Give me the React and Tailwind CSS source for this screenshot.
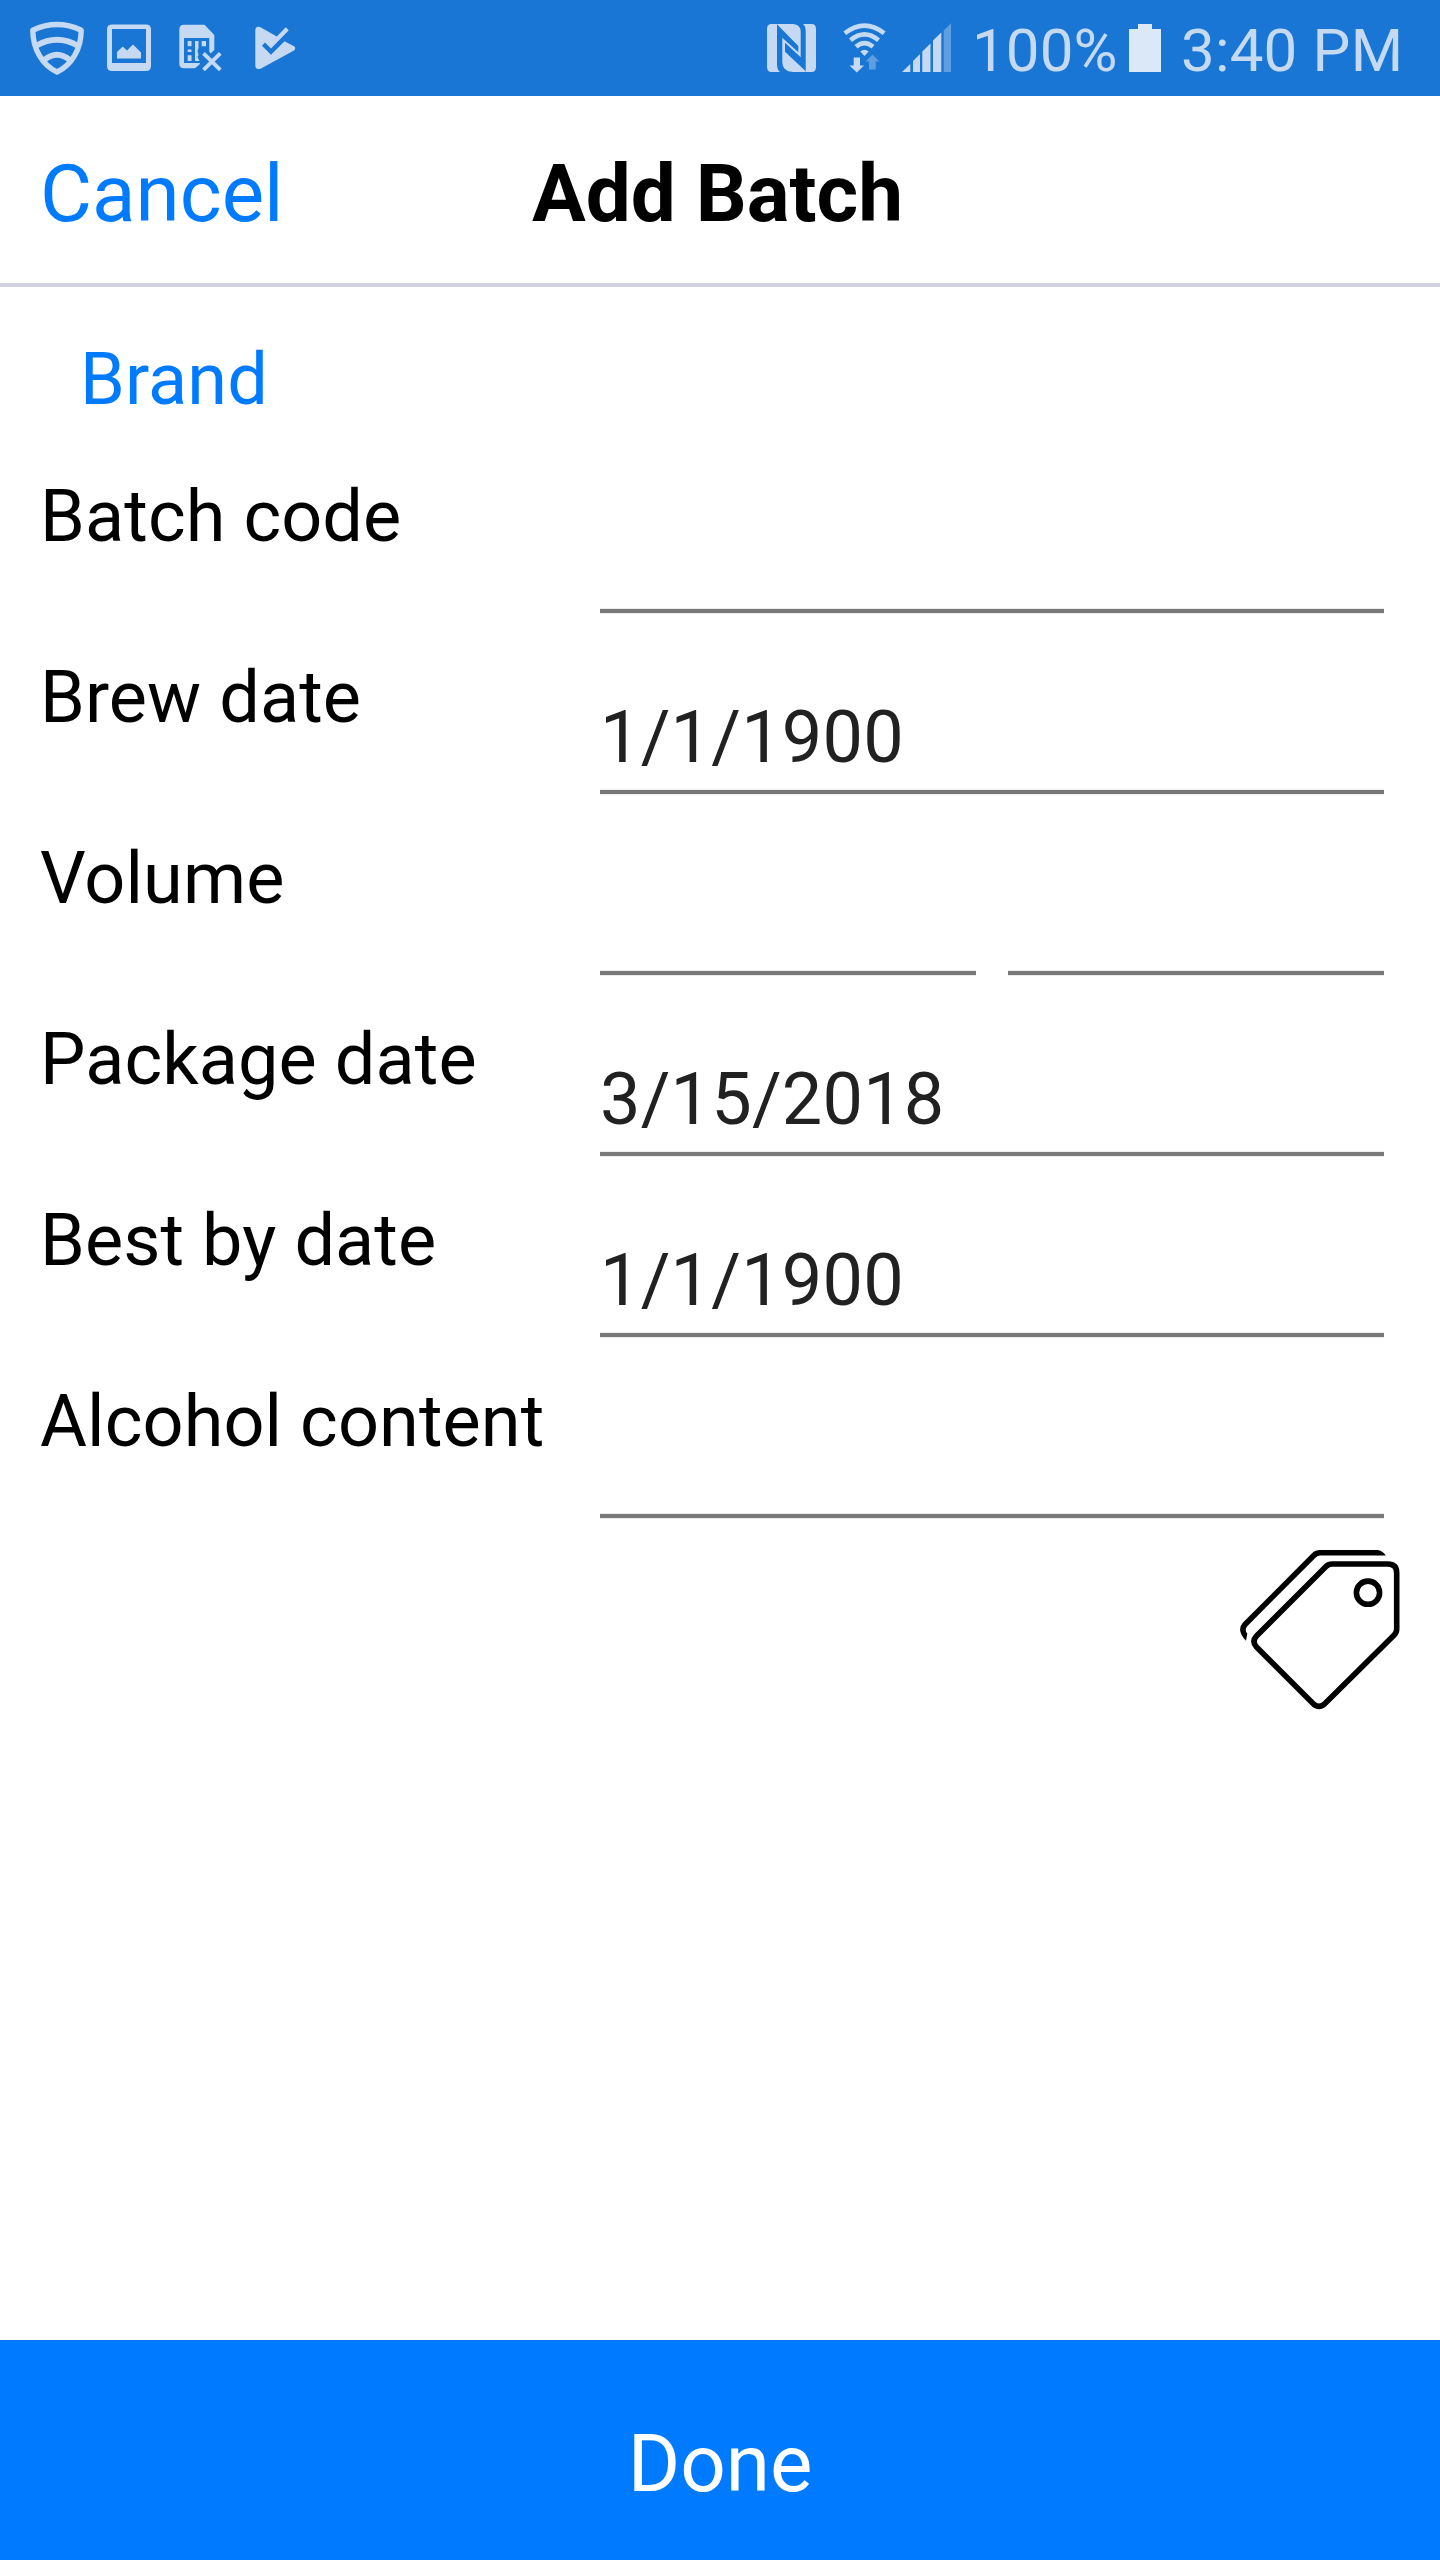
import React from "react";

const ICON = "#c5daf2";

function ShieldIcon() {
  return (
    <svg className="ml-[29px] h-[56px] w-[56px] shrink-0" viewBox="0 0 56 56" fill="none" stroke={ICON} strokeWidth="5.4" strokeLinejoin="round">
      <path d="M3.8 10.2Q28 -1.2 52.2 10.2C52.2 29 42.5 45.5 28 52C13.5 45.5 3.8 29 3.8 10.2Z" />
      <path d="M7.5 25.500Q28 14 48.500 25.500" strokeWidth="6" />
      <path d="M14.500 40.500Q28 29 41.500 40.500" strokeWidth="6" />
    </svg>
  );
}

function PictureIcon() {
  return (
    <svg className="ml-[22px] h-[48px] w-[44px] shrink-0" viewBox="0 0 44 48" fill={ICON}>
      <path fillRule="evenodd" d="M5 0.500H39Q44 0.500 44 5.500V42Q44 47 39 47H5Q0 47 0 42V5.500Q0 0.500 5 0.500ZM5 5V39H39V5Z" />
      <path d="M10 34.500V28L15.700 22.500L20 26.500L26 20.500L34 28.500V34.500Z" />
    </svg>
  );
}

function SimErrorIcon() {
  return (
    <svg className="ml-[28px] h-[48px] w-[44px] shrink-0" viewBox="0 0 44 48" fill={ICON}>
      <path fillRule="evenodd" d="M5 0.700H25.500L35.300 11V26L31.500 29.500L30.300 27.500V14H5V39H21L20.500 40.500L16 44.300H5Q0.300 44.300 0.300 39.600V5.400Q0.300 0.700 5 0.700Z" />
      <path d="M8.700 17H12.500V22.300H8.700ZM8.700 25.500H12.500V28H8.700ZM8.700 31.300H12.500V37H8.700ZM16 17H19.500V24L18.500 27L19.500 31L18.500 33L20.500 37H16ZM22.700 17H27V22.300H22.700Z" />
      <path stroke={ICON} strokeWidth="3.800" d="M24.500 29.300L41.300 45.800M41.300 29.300L24.500 45.800" />
    </svg>
  );
}

function PlayCheckIcon() {
  return (
    <svg className="ml-[32px] h-[48px] w-[42px] shrink-0" viewBox="0 0 42 48">
      <path fill={ICON} d="M0.300 6.500Q0.300 1.600 5 3L21.800 12.500L30.700 3.300L33.800 6.300L16 24.500L10 18.600L7 21.700L16 30.800L29.500 17.200L39 22.300Q41.500 24.300 39 26.500L5.500 44.800Q0.300 46 0.300 41.500Z" />
    </svg>
  );
}

function NfcIcon() {
  return (
    <svg className="h-[48px] w-[49px] shrink-0" viewBox="0 0 49 48" fill={ICON}>
      <path d="M4.500 0H10V41Q10.200 46 13 48H4.500Q0 48 0 43V5Q0 0 4.500 0Z" />
      <path d="M10 0H26Q33.700 0.500 33.700 8V33.300L18 18.700V27.700L38.500 47V48H26Q15.300 47.500 15.300 38V13.700L31.300 28.300V22L10.700 1Z" />
      <path d="M36 0H44.500Q49 0 49 5V43Q49 48 44.500 48H38.700V7Q38.700 2 36 0Z" />
    </svg>
  );
}

function WifiIcon() {
  return (
    <svg className="ml-[27px] h-[50px] w-[43px] shrink-0" viewBox="0 0 43 50">
      <g fill="none" stroke={ICON} strokeWidth="4.600">
        <path d="M1.800 10.300Q21.500 -5 41.200 10.300" />
        <path d="M7.500 17.200Q21.500 5.500 35.500 17.200" />
        <path d="M13 23.800Q21.500 16.500 30 23.800" />
      </g>
      <path fill={ICON} d="M17.300 28.500Q21.500 25 25.700 28.500L21.500 33Z" />
      <path fill={ICON} d="M10.700 34.500H17V42.500H21L13.800 49.500L6.500 42.500H10.700Z" />
      <path fill="#5e9fe0" d="M29.500 31.500L36.300 38.500H32.700V46.500H26V38.500H22.500Z" />
    </svg>
  );
}

function SignalIcon() {
  return (
    <svg className="ml-[16px] h-[49px] w-[49px] shrink-0" viewBox="0 0 49 49">
      <path fill={ICON} d="M0 49L8.300 41V49ZM11 49V38L18 31V49ZM20.300 49V28.500L28.500 20.500V49ZM31 49V17.500L39.300 9.500V49Z" />
      <path fill="#5e9fe0" d="M41.700 49V7.500L49 0.300V49Z" />
    </svg>
  );
}

function BatteryIcon() {
  return (
    <svg className="h-[48px] w-[32px] shrink-0" viewBox="0 0 32 48">
      <path fill="#dbe8f8" d="M9 0H23V5H32V48H0V5H9Z" />
    </svg>
  );
}

function TagsIcon() {
  return (
    <svg className="h-[160px] w-[160px]" viewBox="0 0 160 160" fill="none" stroke="#000" strokeWidth="5.600">
      <path d="M138 2.800H80Q76.500 2.800 74 5.200L5 74.500Q3 76.700 2.800 80" />
      <path fill="#000" stroke="none" d="M137.500 0Q142.500 0.500 145.800 5.600H137.500ZM0 79.500Q0.500 85.500 6 90.700L7.300 83.500Q5.600 81.500 5.600 79.500Z" />
      <path d="M92 14H148Q156.700 14 156.700 23V79Q156.700 82.500 154.200 85L85 153.500Q79 159.500 73 153.500L16.500 97Q11.500 91.500 16.500 86L86 16.500Q88.500 14 92 14Z" />
      <circle cx="128" cy="42.700" r="11.600" />
    </svg>
  );
}

function StatusBar() {
  return (
    <div className="flex h-[96px] items-start bg-[#1976d5] pt-[24px] text-[60px] leading-[70px] text-[#c5daf2]">
      <div className="flex items-start">
        <div className="-mt-[4px]"><ShieldIcon /></div>
        <PictureIcon />
        <SimErrorIcon />
        <PlayCheckIcon />
      </div>
      <div className="ml-auto flex items-start">
        <NfcIcon />
        <div className="-mt-[1px] flex"><WifiIcon /></div>
        <div className="-mt-[1px] flex"><SignalIcon /></div>
        <span className="-mt-[8px] ml-[21px] w-[157px] whitespace-nowrap tracking-[0.1px]">100%</span>
        <BatteryIcon />
        <span className="-mt-[8px] ml-[20px] w-[259px] whitespace-nowrap tracking-[0.2px]">3:40 PM</span>
      </div>
    </div>
  );
}

function Field({ value = "" }) {
  return (
    <div className="flex h-[139px] flex-1 flex-col justify-between pt-[40px] tracking-[0.2px] text-[#212121]">
      <span className="h-[84px]">{value}</span>
      <span className="h-[6px] border-y border-[#ececec] bg-[#797979]" />
    </div>
  );
}

function Row({ label, values }) {
  return (
    <div className="flex h-[139px]">
      <div className="w-[560px] shrink-0 whitespace-nowrap">{label}</div>
      <div className="flex flex-1 gap-[32px]">
        {values.map((v, i) => <Field key={i} value={v} />)}
      </div>
    </div>
  );
}

const rows = [
  { label: "Batch code", values: [""] },
  { label: "Brew date", values: ["1/1/1900"] },
  { label: "Volume", values: ["", ""] },
  { label: "Package date", values: ["3/15/2018"] },
  { label: "Best by date", values: ["1/1/1900"] },
  { label: "Alcohol content", values: [""] },
];

export default function App() {
  return (
    <div className="flex h-[2560px] w-[1440px] flex-col overflow-hidden bg-white font-['Roboto',sans-serif] text-black">
      <StatusBar />
      <header className="grid h-[191px] grid-cols-3 items-center border-b-4 border-[#d1d1e0] px-[40px] pt-[8px] text-[80px] leading-[94px]">
        <button className="text-left text-[#007aff]">Cancel</button>
        <h1 className="whitespace-nowrap pr-[5px] text-center font-bold">Add Batch</h1>
      </header>
      <main className="flex flex-1 flex-col text-[72px] leading-[84px] tracking-[0.1px]">
        <button className="mt-[51px] self-start pl-[80px] text-[#007aff]">Brand</button>
        <div className="mt-[53px] flex flex-col gap-[42px] pl-[40px] pr-[56px]">
          {rows.map((r) => <Row key={r.label} {...r} />)}
        </div>
        <div className="mt-[31px] flex justify-end pr-[40px]">
          <TagsIcon />
        </div>
      </main>
      <button className="flex h-[220px] items-center justify-center bg-[#007aff] pt-[28px] text-[80px] leading-[94px] text-white">Done</button>
    </div>
  );
}
